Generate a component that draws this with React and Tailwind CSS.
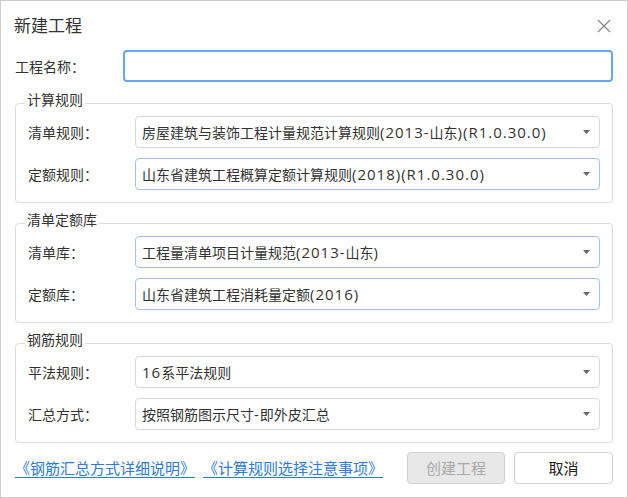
import React from "react";

const font = { fontFamily: '"Open Sans", "Noto Sans CJK SC", sans-serif' };

// 西文部分在原界面里更宽，单独放大一点
function MixedText({ text }) {
    const parts = text.match(/[\x00-\x7F]+|[^\x00-\x7F]+/g) || [];
    return parts.map((p, i) =>
        /^[\x00-\x7F]+$/.test(p) ? (
            <span key={i} className="text-[15px] tracking-[1px]">
                {p}
            </span>
        ) : (
            <span key={i}>{p}</span>
        )
    );
}

function Select({ value, active }) {
    return (
        <div
            className={`flex items-center justify-between w-[465px] h-[32px] rounded-[4px] border bg-white pl-[6px] pr-[9px] ${
                active ? "border-[#a9c1e6]" : "border-[#dadada]"
            }`}
        >
            <span className="text-[14px] text-[#333] leading-none whitespace-nowrap">
                <MixedText text={value} />
            </span>
            <svg width="7" height="4" viewBox="0 0 7 4">
                <path d="M0 0 L7 0 L3.5 4 Z" fill="#666" />
            </svg>
        </div>
    );
}

function Row({ label, value, active }) {
    return (
        <div className="flex items-center">
            <span className="w-[107px] text-[14px] text-[#333]">{label}</span>
            <Select value={value} active={active} />
        </div>
    );
}

function Group({ title, rows }) {
    return (
        <fieldset className="border border-[#dcdcdc] rounded-[4px] pl-[12px] pr-[12px] pt-0 pb-[12px]">
            <legend className="-ml-[3px] px-[2px] pb-[6px] text-[14px] leading-[20px] text-[#333]">{title}</legend>
            <div className="flex flex-col gap-[10px]">
                {rows.map((r) => (
                    <Row key={r.label} {...r} />
                ))}
            </div>
        </fieldset>
    );
}

export default function App() {
    return (
        <div className="w-[628px] h-[498px] bg-white border border-[#cdcdcd] flex flex-col" style={font}>
            {/* 标题栏 */}
            <div className="h-[49px] flex items-center justify-between pl-[13px] pr-[16px]">
                <span className="text-[17px] text-[#333]">新建工程</span>
                <svg width="14" height="14" viewBox="0 0 14 14">
                    <path d="M1 1 L13 13 M13 1 L1 13" stroke="#8a8a8a" strokeWidth="1.4" />
                </svg>
            </div>

            <div className="px-[14px] flex flex-col">
                {/* 工程名称 */}
                <div className="flex items-center">
                    <span className="w-[108px] text-[14px] text-[#333]">工程名称：</span>
                    <div className="w-[490px] h-[32px] rounded-[4px] border-2 border-[#6aa5ef] bg-white" />
                </div>

                <div className="mt-[8px]">
                    <Group
                        title="计算规则"
                        rows={[
                            { label: "清单规则：", value: "房屋建筑与装饰工程计量规范计算规则(2013-山东)(R1.0.30.0)" },
                            { label: "定额规则：", value: "山东省建筑工程概算定额计算规则(2018)(R1.0.30.0)", active: true },
                        ]}
                    />
                </div>

                <div className="mt-[7px]">
                    <Group
                        title="清单定额库"
                        rows={[
                            { label: "清单库：", value: "工程量清单项目计量规范(2013-山东)", active: true },
                            { label: "定额库：", value: "山东省建筑工程消耗量定额(2016)", active: true },
                        ]}
                    />
                </div>

                <div className="mt-[7px]">
                    <Group
                        title="钢筋规则"
                        rows={[
                            { label: "平法规则：", value: "16系平法规则" },
                            { label: "汇总方式：", value: "按照钢筋图示尺寸-即外皮汇总" },
                        ]}
                    />
                </div>

                {/* 底部 */}
                <div className="mt-[9px] flex items-center">
                    <div className="flex items-center gap-[8px] text-[15px] text-[#2b7be0]">
                        <span className="underline underline-offset-[3px]">《钢筋汇总方式详细说明》</span>
                        <span className="underline underline-offset-[3px]">《计算规则选择注意事项》</span>
                    </div>
                    <div className="ml-auto flex gap-[9px]">
                        <button className="w-[98px] h-[32px] rounded-[4px] border border-[#cfcfcf] bg-[#e8e8e8] text-[15px] text-[#a8a8a8]">
                            创建工程
                        </button>
                        <button className="w-[99px] h-[32px] rounded-[4px] border border-[#cfcfcf] bg-white text-[15px] text-[#222]">
                            取消
                        </button>
                    </div>
                </div>
            </div>
        </div>
    );
}
